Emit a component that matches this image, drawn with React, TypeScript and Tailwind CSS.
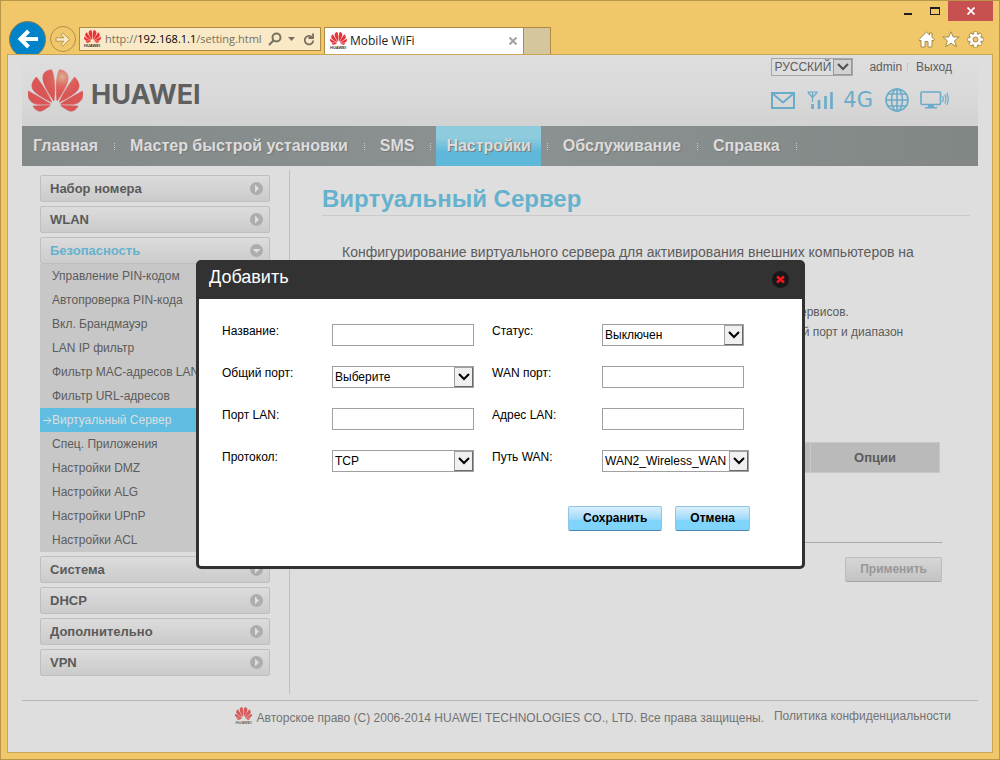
import { useState, type ReactNode } from 'react';
import { SiHuawei } from 'react-icons/si';

const NAV_ITEMS = ['Главная', 'Мастер быстрой установки', 'SMS', 'Настройки', 'Обслуживание', 'Справка'];

const SECURITY_ITEMS = [
  'Управление PIN-кодом',
  'Автопроверка PIN-кода',
  'Вкл. Брандмауэр',
  'LAN IP фильтр',
  'Фильтр MAC-адресов LAN',
  'Фильтр URL-адресов',
  'Виртуальный Сервер',
  'Спец. Приложения',
  'Настройки DMZ',
  'Настройки ALG',
  'Настройки UPnP',
  'Настройки ACL',
];

export default function App() {
  const [open, setOpen] = useState(true);

  return (
    <div className="min-h-screen flex flex-col bg-[#f0c869] border border-[#b8964a] font-['Liberation_Sans',Arial,sans-serif] text-xs text-[#5c5c5c]">
      <BrowserBar />
      <div className="relative flex-1 flex flex-col mx-1.5 mb-1.5 px-3.5 bg-[#dedede] border border-[#c9a557]">
        <PageHeader />
        <MainNav />
        <main className="flex h-[534px]">
          <Sidebar />
          <div className="w-px shrink-0 mt-1 mb-1.5 bg-[#c0c0c0]" />
          <Content />
        </main>
        <PageFooter />
        {open && <AddDialog onClose={() => setOpen(false)} />}
      </div>
    </div>
  );
}

/* Browser window */

function BrowserBar() {
  return (
    <header className="relative h-[53px] shrink-0 pt-[23px] pl-2 pr-[15px] flex items-center font-['Open_Sans','Noto_Sans',sans-serif]">
      <button type="button" aria-label="Назад" className="size-[37px] shrink-0 rounded-full bg-[#0083c8] border border-[#8b7b4c] flex items-center justify-center">
        <svg width="21" height="20" viewBox="0 0 21 20" fill="none" stroke="#fff" strokeWidth="4">
          <path d="M2.500 10H21M11.500 2L3.500 10L11.500 18" />
        </svg>
      </button>
      <button type="button" aria-label="Вперед" className="size-[26px] ml-1 shrink-0 rounded-full border border-[#b08f4c] flex items-center justify-center">
        <svg width="16" height="15" viewBox="0 0 16 15">
          <path d="M1 5.800H9L6 2.700L7.800 1L14.500 7.500L7.800 14L6 12.300L9 9.200H1Z" fill="#faebc8" stroke="#b8964a" strokeWidth="1" />
        </svg>
      </button>
      <div className="w-[242px] h-6 ml-[3px] pl-[3px] pr-[5px] shrink-0 flex items-center bg-[#f9e9c7] border border-[#ae8c45]">
        <Favicon />
        <div role="textbox" aria-label="Адрес" className="flex-1 ml-1 text-[11px] text-[#77705c] whitespace-nowrap">
          http://<span className="text-black">192.168.1.1</span>/setting.html
        </div>
        <svg className="shrink-0" width="14" height="14" viewBox="0 0 14 14" fill="none" stroke="#77705c" strokeWidth="2">
          <circle cx="8.500" cy="5.500" r="4" />
          <path d="M5.500 8.500L1 13" />
        </svg>
        <svg className="ml-1.5 shrink-0" width="7" height="4" viewBox="0 0 7 4" fill="#77705c"><path d="M0 0H7L3.500 4Z" /></svg>
        <svg className="ml-2 shrink-0" width="12" height="13" viewBox="0 0 12 13" fill="none" stroke="#77705c" strokeWidth="1.800">
          <path d="M9.200 4.200A4.300 4.300 0 1 0 10.300 7.500" />
          <path d="M10 0.500V5H5.500" />
        </svg>
      </div>
      <div className="self-end w-[200px] h-[27px] ml-[3px] pl-1 pr-1.5 shrink-0 flex items-center bg-white border border-b-0 border-[#ae8c45] text-xs text-[#1c1c1c]">
        <Favicon />
        <span className="ml-[3px] flex-1">Mobile WiFi</span>
        <button type="button" aria-label="Закрыть вкладку">
          <svg width="8" height="8" viewBox="0 0 8 8" stroke="#a3a3a3" strokeWidth="2"><path d="M0.500 0.500L7.500 7.500M7.500 0.500L0.500 7.500" /></svg>
        </button>
      </div>
      <button type="button" aria-label="Новая вкладка" className="self-end w-[27px] h-[27px] shrink-0 bg-[#d6c69e] border border-l-0 border-b-0 border-[#ae8c45]" />
      <div className="ml-auto flex items-center gap-[7px]">
        <button type="button" aria-label="Домой">
          <svg width="17" height="17" viewBox="0 0 17 17" fill="#fff" stroke="#a88a4a" strokeWidth="1">
            <path d="M8.500 1L11.500 3.900V2H14V6.300L16.400 8.700L15 10L14 9.200V16H10V10.500H7V16H3V9.200L2 10L0.600 8.700Z" />
          </svg>
        </button>
        <button type="button" aria-label="Избранное">
          <svg width="18" height="17" viewBox="0 0 18 17" fill="#fff" stroke="#a88a4a" strokeWidth="1">
            <path d="M9 0.800L11.300 6H17.200L12.600 9.700L14.400 15.800L9 12.200L3.600 15.800L5.400 9.700L0.800 6H6.700Z" />
          </svg>
        </button>
        <button type="button" aria-label="Сервис">
          <svg width="17" height="17" viewBox="0 0 17 17">
            <g stroke="#a88a4a" strokeWidth="4.400">
              <path d="M8.500 0.500V16.500M0.500 8.500H16.500M2.900 2.900L14.100 14.100M14.100 2.900L2.900 14.100" />
            </g>
            <circle cx="8.500" cy="8.500" r="6.300" fill="#a88a4a" />
            <g stroke="#fff" strokeWidth="2.600">
              <path d="M8.500 1V16M1 8.500H16M3.300 3.300L13.700 13.700M13.700 3.300L3.300 13.700" />
            </g>
            <circle cx="8.500" cy="8.500" r="5.500" fill="#fff" />
            <circle cx="8.500" cy="8.500" r="2.500" fill="#f0c869" stroke="#a88a4a" />
          </svg>
        </button>
      </div>
      <div className="absolute top-0 right-1.5 h-5 flex items-center">
        <button type="button" aria-label="Свернуть" className="w-[27px] h-5 flex items-center justify-center">
          <svg width="8" height="10" viewBox="0 0 8 10"><path d="M0 7H8V9H0Z" fill="#1f1f1f" /></svg>
        </button>
        <button type="button" aria-label="Развернуть" className="w-[27px] h-5 flex items-center justify-center">
          <svg width="10" height="8" viewBox="0 0 10 8"><path d="M0 0H10V8H0ZM1 2V7H9V2Z" fill="#1f1f1f" fillRule="evenodd" /></svg>
        </button>
        <button type="button" aria-label="Закрыть" className="w-[45px] h-5 bg-[#c75050] flex items-center justify-center">
          <svg width="8" height="8" viewBox="0 0 8 8" stroke="#fff" strokeWidth="1.700"><path d="M0.500 0.500L7.500 7.500M7.500 0.500L0.500 7.500" /></svg>
        </button>
      </div>
    </header>
  );
}

function Favicon({ muted }: { muted?: boolean }) {
  return (
    <span className={`relative block h-[18px] w-[18px] shrink-0 overflow-hidden ${muted ? 'text-[#d65a58]' : 'text-[#e8343c]'}`}>
      <SiHuawei size={17} className="-mt-0.5 mx-auto" />
      <span className={`absolute inset-x-0 bottom-0 text-center text-[4px] leading-[4px] font-bold font-['Liberation_Sans',Arial,sans-serif] ${muted ? 'text-[#666666]' : 'text-[#333333]'}`}>
        HUAWEI
      </span>
    </span>
  );
}

/* Router page */

function PageHeader() {
  return (
    <div className="h-[71px] shrink-0 pl-1.5 pr-[26px] flex justify-between bg-linear-to-b from-[#dedede] via-[#dadada] to-[#d2d2d2]">
      <div className="flex items-center">
        <svg className="absolute" width="0" height="0" aria-hidden="true">
          <defs>
            <radialGradient id="petals" gradientUnits="userSpaceOnUse" cx="15" cy="6" r="8">
              <stop offset="0%" stopColor="#dcae92" />
              <stop offset="55%" stopColor="#dc655f" />
              <stop offset="100%" stopColor="#d95656" />
            </radialGradient>
          </defs>
        </svg>
        <SiHuawei size={55} fill="url(#petals)" stroke="url(#petals)" strokeWidth="0.3" />
        <span className="ml-2 mt-2 text-[27px] leading-7 font-bold font-['Inter',sans-serif] text-[#5f5f5f]">HUAWEI</span>
      </div>
      <div className="flex flex-col items-end">
        <div className="mt-[3px] flex items-center">
          <SelectBox id="language" label="Язык" options={['РУССКИЙ']} variant="muted" />
          <span className="ml-4">admin</span>
          <span className="h-2 ml-[5px] mr-2 border-l border-dotted border-[#b5b5b5]" />
          <a href="#logout">Выход</a>
        </div>
        <StatusIcons />
      </div>
    </div>
  );
}

function StatusIcons() {
  return (
    <div className="mt-3 mr-[3px] h-6 flex items-center text-[#6aabc9]">
      <svg width="24" height="17" viewBox="0 0 24 17" fill="none" stroke="currentColor" strokeWidth="2">
        <path d="M1 1H23V16H1ZM1.500 1.500L12 10.500L22.500 1.500" />
      </svg>
      <svg className="ml-3" width="26" height="18" viewBox="0 0 26 18" fill="none" stroke="currentColor">
        <path d="M0.500 1H10.500M1 1.500L5.500 6.500L10 1.500M5.500 1V11" strokeWidth="1.200" />
        <path d="M5.500 13V18M12 9V18M18.500 5V18M24.500 1V18" strokeWidth="2.600" />
      </svg>
      <span className="ml-[10px] text-[21px] leading-6 font-['DejaVu_Sans',sans-serif]">4G</span>
      <svg className="ml-[12px]" width="24" height="24" viewBox="0 0 24 24" fill="none" stroke="currentColor" strokeWidth="1.600">
        <circle cx="12" cy="12" r="11" />
        <ellipse cx="12" cy="12" rx="5.500" ry="11" />
        <path d="M12 1V23M1 12H23M2.800 6H21.200M2.800 18H21.200" />
      </svg>
      <svg className="ml-[11px]" width="29" height="18" viewBox="0 0 29 18" fill="none" stroke="currentColor" strokeWidth="1.600">
        <rect x="1" y="1" width="19.500" height="12.500" rx="1" />
        <path d="M8 14H14V16H17V17.500H5V16H8Z" fill="currentColor" strokeWidth="0" />
        <path d="M22.500 5Q24 8 22.500 11M24.800 3.500Q27 8 24.800 12.500M26.800 2Q29.600 8 26.800 14" strokeWidth="1.200" />
      </svg>
    </div>
  );
}

function MainNav() {
  return (
    <nav className="h-10 shrink-0 pl-px flex items-center bg-linear-to-r from-[#838888] via-[#8c9292] to-[#828786] text-base font-bold text-[#dcdcdc] text-shadow-[1px_1px_1px_#777777]">
      {NAV_ITEMS.map((item) => (
        <div key={item} className="h-full flex items-center">
          <a
            href="#nav"
            className={`h-full px-2.5 flex items-center ${item === 'Настройки' ? 'bg-linear-to-b from-[#8ecbdc] from-30% to-[#5fb8da] to-65%' : ''}`}
          >
            {item}
          </a>
          <span className="h-[7px] ml-1.5 mr-[5px] border-l border-dotted border-[#c8c8c8]" />
        </div>
      ))}
    </nav>
  );
}

function Sidebar() {
  return (
    <aside className="w-[267px] shrink-0 pt-[9px] pl-[18px] pr-[19px] flex flex-col gap-1">
      <MenuButton>Набор номера</MenuButton>
      <MenuButton>WLAN</MenuButton>
      <div>
        <MenuButton expanded>Безопасность</MenuButton>
        <ul className="bg-[#c7c7c7]">
          {SECURITY_ITEMS.map((item) => {
            const active = item === 'Виртуальный Сервер';
            return (
              <li key={item}>
                <a href="#security" className={`relative h-6 pl-3 flex items-center whitespace-nowrap ${active ? 'bg-[#5ebde0] text-[#dedede]' : ''}`}>
                  {active && (
                    <svg className="absolute left-[3px]" width="9" height="9" viewBox="0 0 9 9" fill="none" stroke="#dedede">
                      <path d="M0 4.500H8M4.500 1L8 4.500L4.500 8" />
                    </svg>
                  )}
                  {item}
                </a>
              </li>
            );
          })}
        </ul>
      </div>
      <MenuButton>Система</MenuButton>
      <MenuButton>DHCP</MenuButton>
      <MenuButton>Дополнительно</MenuButton>
      <MenuButton>VPN</MenuButton>
    </aside>
  );
}

function MenuButton({ expanded, children }: { expanded?: boolean; children: ReactNode }) {
  return (
    <button
      type="button"
      aria-expanded={!!expanded}
      className={`w-full h-[27px] pl-[9px] pr-1.5 flex items-center justify-between rounded-xs border border-[#bfbfbf] bg-linear-to-b from-[#dcdcdc] to-[#cbcbcb] text-[13px] font-bold ${expanded ? 'text-[#65b2ce]' : 'text-[#5a5a5a]'}`}
    >
      {children}
      <svg width="13" height="13" viewBox="0 0 13 13">
        <circle cx="6.500" cy="6.500" r="6.500" fill="#adadad" />
        <path d={expanded ? 'M2.500 5H10.500L6.500 9Z' : 'M5 2.500V10.500L9 6.500Z'} fill="#dedede" />
      </svg>
    </button>
  );
}

function Content() {
  return (
    <section className="flex-1 min-w-0 pl-8 pr-2">
      <h1 className="mt-[18px] h-8 leading-[30px] text-2xl font-bold text-[#65b2ce] border-b border-[#cacaca]">Виртуальный Сервер</h1>
      <div className="ml-5 mr-7">
        <p className="mt-7 text-sm leading-4">Конфигурирование виртуального сервера для активирования внешних компьютеров на</p>
        <div className="mt-[42px] leading-5">
          <p className="pl-[452px] whitespace-nowrap">сервисов.</p>
          <p className="pl-[418px] whitespace-nowrap">внешний порт и диапазон</p>
        </div>
        <div className="mt-[100px] mr-0.5">
          <table className="w-full table-fixed border-collapse">
            <thead>
              <tr className="h-[30px] bg-[#bababa] text-[13px]">
                <td className="border border-[#c8c8c8]" />
                <th className="w-[129px] border border-[#c8c8c8] font-bold">Опции</th>
              </tr>
            </thead>
          </table>
        </div>
        <div className="mt-[69px] pt-3.5 flex justify-end border-t border-[#ababab]">
          <button
            type="button"
            disabled
            className="h-[25px] px-3.5 pb-0.5 rounded-xs border border-[#bcbcbc] border-b-[#a5a5a5] bg-linear-to-b from-[#d6d6d6] to-[#c3c3c3] font-bold text-[#989898]"
          >
            Применить
          </button>
        </div>
      </div>
    </section>
  );
}

function PageFooter() {
  return (
    <footer className="pt-1.5 pr-[27px] flex items-start justify-end border-t border-[#b5b5b5] text-[#737373]">
      <Favicon muted />
      <p className="ml-1 mt-[3px] leading-4">Авторское право (C) 2006-2014 HUAWEI TECHNOLOGIES CO., LTD. Все права защищены.</p>
      <a href="#privacy" className="ml-2.5 mt-px leading-4">Политика конфиденциальности</a>
    </footer>
  );
}

/* Dialog */

function AddDialog({ onClose }: { onClose: () => void }) {
  return (
    <div className="absolute inset-x-0 top-[205px] pl-px flex justify-center">
      <div role="dialog" aria-labelledby="dialog-title" className="w-[609px] rounded-[5px] bg-white border-3 border-[#323232] text-black">
        <div className="h-9 pl-2.5 pr-[13px] flex justify-between bg-[#323232]">
          <h2 id="dialog-title" className="text-lg leading-7 text-white">Добавить</h2>
          <button type="button" aria-label="Закрыть" onClick={onClose} className="size-[17px] mt-2 rounded-full bg-[#181818] flex items-center justify-center">
            <svg width="9" height="9" viewBox="0 0 9 9" stroke="#f3171c" strokeWidth="2.600"><path d="M1 1.500L8 7.500M8 1.500L1 7.500" /></svg>
          </button>
        </div>
        <form className="pt-[25px] pb-[35px] pl-[23px] pr-[52px]" onSubmit={(e) => e.preventDefault()}>
          <div className="grid grid-cols-[110px_160px_110px_1fr] gap-y-5">
            <FieldLabel id="name">Название:</FieldLabel>
            <TextBox id="name" />
            <FieldLabel id="status">Статус:</FieldLabel>
            <SelectBox id="status" options={['Выключен']} />
            <FieldLabel id="common-port">Общий порт:</FieldLabel>
            <SelectBox id="common-port" options={['Выберите']} />
            <FieldLabel id="wan-port">WAN порт:</FieldLabel>
            <TextBox id="wan-port" />
            <FieldLabel id="lan-port">Порт LAN:</FieldLabel>
            <TextBox id="lan-port" />
            <FieldLabel id="lan-address">Адрес LAN:</FieldLabel>
            <TextBox id="lan-address" />
            <FieldLabel id="protocol">Протокол:</FieldLabel>
            <SelectBox id="protocol" options={['TCP']} />
            <FieldLabel id="wan-path">Путь WAN:</FieldLabel>
            <SelectBox id="wan-path" options={['WAN2_Wireless_WAN']} variant="wide" />
          </div>
          <div className="mt-[34px] flex justify-end gap-[13px]">
            <DialogButton>Сохранить</DialogButton>
            <DialogButton onClick={onClose}>Отмена</DialogButton>
          </div>
        </form>
      </div>
    </div>
  );
}

function FieldLabel({ id, children }: { id: string; children: ReactNode }) {
  return <label htmlFor={id} className="leading-3.5">{children}</label>;
}

function TextBox({ id }: { id: string }) {
  return <input id={id} type="text" className="w-[142px] h-[22px] px-0.5 bg-white border border-[#a0a0a0]" />;
}

const SELECT_WIDTHS = {
  default: 'w-[142px] h-[22px]',
  wide: 'w-[147px] h-[22px]',
  muted: 'w-[82px] h-[18px]',
};

function SelectBox({
  id,
  label,
  options,
  variant = 'default',
}: {
  id: string;
  label?: string;
  options: string[];
  variant?: 'default' | 'wide' | 'muted';
}) {
  const muted = variant === 'muted';
  return (
    <div className={`relative ${SELECT_WIDTHS[variant]}`}>
      <select
        id={id}
        aria-label={label}
        className={`block w-full h-full pl-0.5 appearance-none border ${muted ? 'bg-[#dedede] border-[#a6a6a6]' : 'bg-white border-[#a0a0a0]'}`}
      >
        {options.map((option) => (
          <option key={option}>{option}</option>
        ))}
      </select>
      <span
        className={`absolute inset-y-px right-px w-[19px] flex items-center justify-center pointer-events-none border ${muted ? 'bg-[#d2d2d2] border-[#999999]' : 'bg-[#f0f0f0] border-[#a0a0a0] border-r-[#696969] border-b-[#696969]'}`}
      >
        <svg width="12" height="8" viewBox="0 0 12 8" fill="none" stroke={muted ? '#505050' : '#000000'} strokeWidth="2">
          <path d="M1 1L6 6L11 1" />
        </svg>
      </span>
    </div>
  );
}

function DialogButton({ onClick, children }: { onClick?: () => void; children: ReactNode }) {
  return (
    <button
      type="button"
      onClick={onClick}
      className="h-[25px] px-3.5 pb-0.5 rounded-xs border border-[#8fc4e4] border-b-[#4a86b5] bg-linear-to-b from-[#d8effc] via-[#a3dbfa] to-[#7fd4fb] to-60% font-bold"
    >
      {children}
    </button>
  );
}
